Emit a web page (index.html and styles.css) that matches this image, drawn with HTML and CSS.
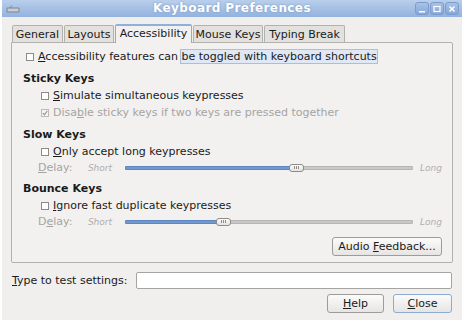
FILE: index.html
```html
<!DOCTYPE html>
<html>
<head>
<meta charset="utf-8">
<link rel="stylesheet" href="styles.css">
</head>
<body>
<div class="window">
  <div class="titlebar">
    <svg class="app-icon" width="14" height="8" viewBox="0 0 14 8">
      <path d="M1 3 L13 3 L13 7 L1 7 Z" fill="#c9ccd2" stroke="#7d8594" stroke-width="1"/>
      <path d="M4 3 L6 0.5" stroke="#7d8594" stroke-width="1" fill="none"/>
    </svg>
    <div class="title">Keyboard Preferences</div>
    <div class="wbtns">
      <div class="wbtn"><svg width="8" height="8" viewBox="0 0 8 8"><rect x="1" y="6" width="6" height="1.5" fill="#fff"/></svg></div>
      <div class="wbtn"><svg width="8" height="8" viewBox="0 0 8 8"><rect x="1" y="1.5" width="6" height="5" fill="none" stroke="#fff" stroke-width="1.2"/></svg></div>
      <div class="wbtn"><svg width="8" height="8" viewBox="0 0 8 8"><path d="M1.5 1.5 L6.5 6.5 M6.5 1.5 L1.5 6.5" stroke="#fff" stroke-width="1.5"/></svg></div>
    </div>
  </div>
  <div class="body">
    <div class="tabs">
      <div class="tab t-general">General</div>
      <div class="tab t-layouts">Layouts</div>
      <div class="tab active t-access">Accessibility</div>
      <div class="tab t-mouse">Mouse Keys</div>
      <div class="tab t-typing">Typing Break</div>
    </div>
    <div class="panel">
      <div class="row top"><span class="cb"></span><span><u>A</u>ccessibility features can <span class="hl">be toggled with keyboard shortcuts</span></span></div>
      <div class="heading">Sticky Keys</div>
      <div class="row ind"><span class="cb"></span><span><u>S</u>imulate simultaneous keypresses</span></div>
      <div class="row ind dis"><span class="cb checked"><svg width="6" height="6" viewBox="0 0 6 6"><path d="M0.8 3 L2.5 4.8 L5.3 0.8" stroke="#9a9a9a" stroke-width="1.2" fill="none"/></svg></span><span>Disa<u>b</u>le sticky keys if two keys are pressed together</span></div>
      <div class="heading">Slow Keys</div>
      <div class="row ind"><span class="cb"></span><span><u>O</u>nly accept long keypresses</span></div>
      <div class="row delay">
        <span class="dlabel"><u>D</u>elay:</span>
        <span class="scale">Short</span>
        <div class="slider"><div class="fill" style="width: 59.5%"></div><div class="thumb" style="left: 59.5%"><i></i><i></i><i></i></div></div>
        <span class="scale long">Long</span>
      </div>
      <div class="heading">Bounce Keys</div>
      <div class="row ind"><span class="cb"></span><span><u>I</u>gnore fast duplicate keypresses</span></div>
      <div class="row delay">
        <span class="dlabel">D<u>e</u>lay:</span>
        <span class="scale">Short</span>
        <div class="slider"><div class="fill" style="width: 34%"></div><div class="thumb" style="left: 34%"><i></i><i></i><i></i></div></div>
        <span class="scale long">Long</span>
      </div>
      <div class="audio-row"><button class="btn audio">Audio <u>F</u>eedback...</button></div>
    </div>
    <div class="test-row">
      <span class="test-label"><u>T</u>ype to test settings:</span>
      <div class="input"></div>
    </div>
    <div class="actions">
      <button class="btn help"><u>H</u>elp</button>
      <button class="btn close"><u>C</u>lose</button>
    </div>
  </div>
</div>
</body>
</html>
```

FILE: styles.css
```css
* { box-sizing: border-box; }
html, body { margin: 0; padding: 0; background: #ffffff; }
body {
  font-family: "DejaVu Sans", sans-serif;
  font-size: 11px;
  color: #1a1a1a;
}
u { text-decoration: underline; text-underline-offset: 1px; }
.window {
  margin-left: 2px;
  width: 460px;
  height: 320px;
  background: #f0efee;
  display: flex;
  flex-direction: column;
}
.titlebar {
  height: 17px;
  background: linear-gradient(#b9cfeb, #92b2de);
  display: flex;
  align-items: center;
  position: relative;
}
.app-icon { margin-left: 4px; margin-top: 1px; }
.title {
  position: absolute;
  left: 0; right: 0; top: 0;
  text-align: center;
  line-height: 17px;
  color: #fff;
  font-weight: bold;
  font-size: 12px;
  letter-spacing: 0.4px;
  text-shadow: 0 0 2px #6e8fbf;
}
.wbtns { margin-left: auto; margin-right: 3px; display: flex; gap: 1px; }
.wbtn {
  width: 14px; height: 13px;
  border: 1px solid #7c9acb;
  border-radius: 3px;
  background: linear-gradient(#a9c2e6, #86a8d8);
  display: flex; align-items: center; justify-content: center;
}
.body { flex: 1; display: flex; flex-direction: column; padding: 6px 8px 0 9px; }
.tabs { display: flex; align-items: flex-end; height: 19px; padding-left: 1px; }
.tab {
  height: 17px;
  padding: 0;
  text-align: center;
  white-space: nowrap;
  border: 1px solid #b3b1ae;
  border-bottom: none;
  background: #e3e1de;
  line-height: 17px;
  margin-right: 1px;
  border-radius: 2px 2px 0 0;
  color: #1a1a1a;
}
.t-general { width: 51px; }
.t-layouts { width: 50px; }
.t-access { width: 77px; }
.t-mouse { width: 70px; }
.t-typing { width: 81px; }
.tab.active {
  height: 19px;
  background: #f2f1f0;
  border-color: #a9a7a4;
  border-top: 2px solid #8eb0dc;
  position: relative;
  margin-bottom: -1px;
  line-height: 16px;
  z-index: 1;
}
.panel {
  width: 442px;
  height: 221px;
  border: 1px solid #b3b1ae;
  border-radius: 0 2px 2px 2px;
  background: #f2f1f0;
  padding: 5px 10px 0 11px;
  display: flex;
  flex-direction: column;
}
.row { height: 17px; display: flex; align-items: center; white-space: nowrap; }
.row.top { padding-left: 3px; }
.cb {
  width: 8px; height: 8px;
  border: 1px solid #8d8b88;
  background: #fff;
  margin-right: 4px;
  display: inline-flex; align-items: center; justify-content: center;
  flex: none;
}
.cb.checked { border-color: #bdbbb8; background: #f5f5f5; }
.hl {
  background: #dfe8f4;
  outline: 1px solid #a9bfdc;
}
.heading { font-weight: bold; height: 17px; line-height: 17px; margin-top: 5px; }
.ind { padding-left: 18px; }
.dis { color: #a6a4a2; }
.delay { padding-left: 15px; height: 15px; }
.dlabel { color: #a6a4a2; width: 50px; }
.scale { font-style: italic; font-size: 9px; color: #b0aeac; width: 37px; }
.scale.long { width: auto; margin-left: 7px; }
.slider {
  position: relative;
  width: 289px;
  height: 4px;
  background: #c9c8c6;
  border: 1px solid #b7b6b4;
  border-radius: 1px;
}
.fill { background: #7299cf; border-radius: 1px; margin: -1px 0 0 -1px; height: 4px; border: 1px solid #5f87bf; }
.thumb {
  position: absolute;
  top: -3px;
  width: 15px; height: 8px;
  margin-left: -7px;
  background: linear-gradient(#fbfbfb, #e4e3e1);
  border: 1px solid #8e8c89;
  border-radius: 3px;
  display: flex; justify-content: center; align-items: center; gap: 1px;
}
.thumb i { display: block; width: 1px; height: 3px; background: #8e8c89; }
.audio-row { display: flex; justify-content: flex-end; margin-top: 8px; }
.btn {
  font-family: "DejaVu Sans", sans-serif;
  font-size: 11px;
  color: #1a1a1a;
  border: 1px solid #9e9c99;
  border-radius: 3px;
  background: linear-gradient(#fbfbfa, #e6e5e3);
  padding: 0;
  height: 19px;
}
.audio { width: 110px; }
.test-row { display: flex; align-items: center; margin-top: 9px; height: 17px; }
.test-label { width: 125px; padding-left: 1px; }
.input {
  width: 316px; height: 17px;
  background: #fff;
  border: 1px solid #a6a4a1;
  border-radius: 2px;
}
.actions { display: flex; justify-content: flex-end; gap: 9px; margin-top: 5px; width: 441px; }
.help { width: 57px; }
.close { width: 59px; border-color: #8eaad3; }
```
